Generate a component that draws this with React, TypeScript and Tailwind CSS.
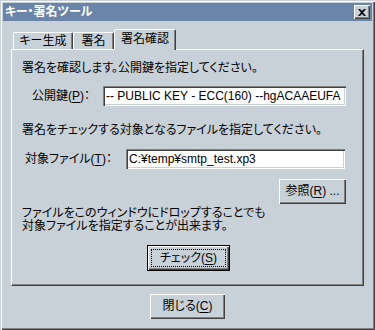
import React from "react";

const raised =
  "shadow-[inset_1px_1px_0_#ffffff,inset_-1px_-1px_0_#404040,inset_-2px_-2px_0_#808080]";
const sunken =
  "shadow-[inset_1px_1px_0_#808080,inset_2px_2px_0_#404040,inset_-1px_-1px_0_#ffffff,inset_-2px_-2px_0_#c8d0d8]";

function U({ children }: { children: React.ReactNode }) {
  return <span className="underline underline-offset-[2px]">{children}</span>;
}

function Tab({ label, active, w }: { label: string; active?: boolean; w: string }) {
  return (
    <div
      className={
        "flex items-center justify-center bg-[#c8d0d8] border-t border-l border-t-white border-l-white border-r border-r-[#404040] shadow-[inset_-1px_0_0_#808080] rounded-t-[2px] " +
        w +
        (active ? " h-[21px] -mb-px pb-[2px] relative z-10" : " h-[17px]")
      }
    >
      {label}
    </div>
  );
}

export default function App() {
  return (
    <div className="w-[375px] h-[330px] bg-[#c8d0d8] p-[3px] text-black text-[12px] leading-[13px] font-['Liberation_Sans','Noto_Sans_CJK_JP',sans-serif] [font-feature-settings:'palt'] shadow-[inset_1px_1px_0_#c8d0d8,inset_2px_2px_0_#ffffff,inset_-1px_-1px_0_#404040,inset_-2px_-2px_0_#808080]">
      {/* title bar */}
      <div className="h-[18px] bg-[#6b85a8] flex items-center justify-between pl-[2px] pr-[2px]">
        <span className="text-white font-bold">キー・署名ツール</span>
        <button className={"w-[16px] h-[14px] bg-[#c8d0d8] flex items-center justify-center " + raised}>
          <svg width="8" height="7" viewBox="0 0 8 7">
            <path d="M0 0h2l2 2 2-2h2L5 3.5 8 7H6L4 5 2 7H0l3-3.5z" fill="#000" />
          </svg>
        </button>
      </div>

      <div className="px-[8px]">
        {/* tabs */}
        <div className="mt-[8px] h-[20px] flex items-end">
          <div className="w-[2px]" />
          <Tab label="キー生成" w="w-[60px]" />
          <Tab label="署名" w="w-[41px]" />
          <Tab label="署名確認" w="w-[62px]" active />
        </div>

        {/* panel */}
        <div className="h-[237px] flex flex-col border border-t-white border-l-white border-r-[#404040] border-b-[#404040] shadow-[inset_-1px_-1px_0_#808080]">
          <p className="pt-[12px] pl-[10px]">署名を確認します。公開鍵を指定してください。</p>

          <div className="mt-[11px] h-[20px] flex items-center">
            <label className="ml-[20px] w-[71px]">
              公開鍵(<U>P</U>)：
            </label>
            <div className={"w-[243px] h-[20px] bg-white pl-[3px] flex items-center overflow-hidden whitespace-nowrap " + sunken}>
              -- PUBLIC KEY - ECC(160) --hgACAAEUFA
            </div>
          </div>

          <p className="mt-[18px] pl-[10px]">署名をチェックする対象となるファイルを指定してください。</p>

          <div className="mt-[12px] h-[20px] flex items-center">
            <label className="ml-[13px] w-[101px]">
              対象ファイル(<U>T</U>)：
            </label>
            <div className={"w-[219px] h-[20px] bg-white pl-[3px] flex items-center overflow-hidden whitespace-nowrap " + sunken}>
              C:¥temp¥smtp_test.xp3
            </div>
          </div>

          <button className={"mt-[10px] ml-[267px] w-[67px] h-[25px] bg-[#c8d0d8] flex items-center justify-center " + raised}>
            参照(<U>R</U>) ...
          </button>

          <p className="mt-[3px] pl-[10px]">
            ファイルをこのウィンドウにドロップすることでも
            <br />
            対象ファイルを指定することが出来ます。
          </p>

          <button className="mt-[12px] ml-[135px] w-[83px] h-[26px] border border-black bg-[#c8d0d8]">
            <span className={"flex w-full h-full p-[3px] " + raised}>
              <span className="flex-1 flex items-center justify-center border border-dotted border-black">
                チェック(<U>S</U>)
              </span>
            </span>
          </button>
        </div>

        <button className={"mt-[8px] ml-[139px] w-[75px] h-[25px] bg-[#c8d0d8] flex items-center justify-center " + raised}>
          閉じる(<U>C</U>)
        </button>
      </div>
    </div>
  );
}
